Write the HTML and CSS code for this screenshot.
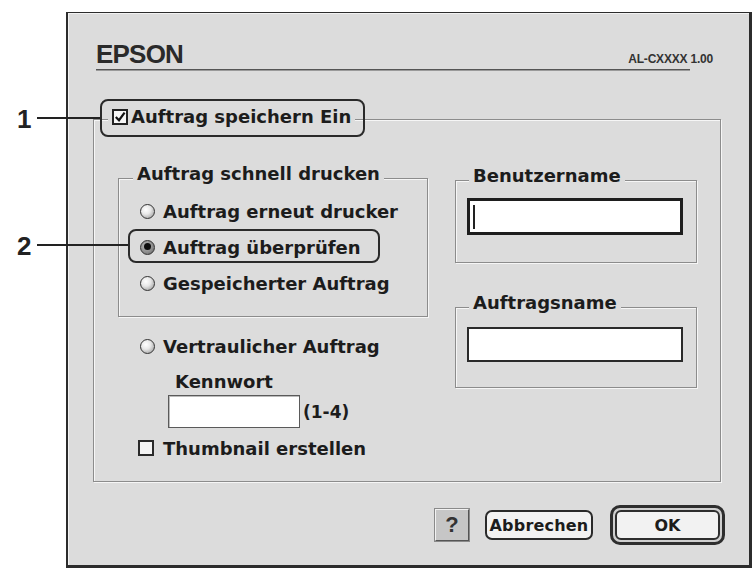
FILE: index.html
```html
<!DOCTYPE html>
<html>
<head>
<meta charset="utf-8">
<title>EPSON</title>
<link rel="stylesheet" href="styles.css">
</head>
<body>
<div class="window">
  <div class="header">
    <span class="brand">EPSON</span>
    <span class="version">AL-CXXXX 1.00</span>
  </div>
  <div class="rule"></div>

  <div class="group main">
    <div class="title main-title">
      <span class="check"><svg viewBox="0 0 16 16" width="16" height="16"><rect x="1" y="1" width="14" height="14" fill="#f6f6f6" stroke="#222" stroke-width="2"/><path d="M3.8 8 L7 11.2 L12.6 3.6" fill="none" stroke="#111" stroke-width="2.2"/></svg></span>
      <span>Auftrag speichern Ein</span>
    </div>
    <div class="cols">
      <div class="col-left">
        <div class="group quick">
          <div class="title">Auftrag schnell drucken</div>
          <div class="radios">
            <div class="opt"><span class="radio"></span><span>Auftrag erneut drucker</span></div>
            <div class="opt"><span class="radio on"></span><span>Auftrag überprüfen</span></div>
            <div class="opt"><span class="radio"></span><span>Gespeicherter Auftrag</span></div>
          </div>
        </div>
        <div class="opt conf"><span class="radio"></span><span>Vertraulicher Auftrag</span></div>
        <div class="pw-label">Kennwort</div>
        <div class="pw-row"><span class="field pw"></span><span class="hint">(1-4)</span></div>
        <div class="opt thumb"><span class="check box"></span><span>Thumbnail erstellen</span></div>
      </div>
      <div class="col-right">
        <div class="group user">
          <div class="title">Benutzername</div>
          <div class="field focus"><span class="caret"></span></div>
        </div>
        <div class="group job">
          <div class="title">Auftragsname</div>
          <div class="field plain"></div>
        </div>
      </div>
    </div>
  </div>

  <div class="buttons">
    <div class="btn help">?</div>
    <div class="btn cancel">Abbrechen</div>
    <div class="btn ok"><span class="ok-inner">OK</span></div>
  </div>
</div>

<div class="callout-num n1">1</div>
<div class="callout-line l1"></div>
<div class="callout-box b1"></div>
<div class="callout-num n2">2</div>
<div class="callout-line l2"></div>
<div class="callout-box b2"></div>
</body>
</html>
```

FILE: styles.css
```css
html, body {
  margin: 0;
  padding: 0;
  background: #ffffff;
}
body {
  width: 754px;
  height: 568px;
  overflow: hidden;
  position: relative;
  font-family: "DejaVu Sans", "Liberation Sans", sans-serif;
  color: #1c1c1c;
}
.window {
  margin: 12px 0 0 66px;
  width: 686px;
  height: 556px;
  box-sizing: border-box;
  border-style: solid;
  border-color: #2c2c2c;
  border-width: 1px 3px 3px 2px;
  background: #dcdcdc;
  box-shadow: inset 1px 1px 0 #f2f2f2;
  padding: 27px 28px 0 25px;
}
.header {
  display: flex;
  justify-content: space-between;
  align-items: baseline;
  margin: 0 8px 0 3px;
  height: 28px;
}
.brand {
  font-family: "Liberation Sans", Arial, sans-serif;
  font-weight: bold;
  font-size: 26px;
  line-height: 28px;
  letter-spacing: -0.8px;
  color: #2a2a2a;
}
.version {
  font-family: "Liberation Sans", Arial, sans-serif;
  font-weight: bold;
  font-size: 12px;
  letter-spacing: -0.2px;
  color: #333;
}
.rule {
  margin: 1px 0 0 3px;
  width: 594px;
  height: 1px;
  background: #555;
  border-bottom: 1px solid #9a9a9a;
}
.group {
  border: 1px solid #8c8c8c;
  box-shadow: 1px 1px 0 #f6f6f6, inset 1px 1px 0 #f6f6f6;
}
.title {
  width: fit-content;
  background: #dcdcdc;
  padding: 0 4px;
  font-weight: bold;
  font-size: 18px;
  line-height: 20px;
  white-space: nowrap;
}
.main {
  margin-top: 48px;
  padding: 0 23px 15px 24px;
}
.main-title {
  display: flex;
  align-items: center;
  gap: 3px;
  line-height: 22px;
  margin: -14px 0 0 -10px;
}
.check {
  display: block;
  width: 16px;
  height: 16px;
  flex: none;
}
.check svg { display: block; }
.check.box {
  width: 16px;
  height: 16px;
  box-sizing: border-box;
  border: 2px solid #2a2a2a;
  background: #f4f4f4;
}
.cols {
  display: grid;
  grid-template-columns: 310px 242px;
  column-gap: 27px;
  margin-top: 50px;
  align-items: start;
}
.quick {
  padding: 0 0 15px 21px;
}
.quick .title {
  margin: -15px 0 0 -7px;
}
.radios {
  margin-top: 9px;
}
.opt {
  display: flex;
  align-items: center;
  gap: 8px;
  height: 36px;
  font-weight: bold;
  font-size: 18px;
  white-space: nowrap;
}
.radio {
  width: 15px;
  height: 15px;
  box-sizing: border-box;
  border-radius: 50%;
  border: 1.5px solid #333;
  background: radial-gradient(circle at 38% 35%, #ffffff 0%, #e8e8e8 40%, #8e8e8e 100%);
  position: relative;
  flex: none;
}
.radio.on {
  background: radial-gradient(circle at 40% 38%, #bdbdbd 0%, #8a8a8a 60%, #555 100%);
}
.radio.on::after {
  content: "";
  position: absolute;
  left: 2.5px;
  top: 2.5px;
  width: 7px;
  height: 7px;
  border-radius: 50%;
  background: #0e0e0e;
}
.conf {
  margin-top: 11px;
  padding-left: 22px;
}
.pw-label {
  margin: 8px 0 0 57px;
  font-weight: bold;
  font-size: 18px;
  line-height: 20px;
}
.pw-row {
  display: flex;
  align-items: center;
  gap: 3px;
  margin: 3px 0 0 50px;
  height: 33px;
}
.field {
  background: #ffffff;
  box-sizing: border-box;
}
.pw {
  width: 132px;
  height: 33px;
  border: 1.5px solid #5a5a5a;
  box-shadow: inset 1px 1px 0 #bbb;
}
.hint {
  font-weight: bold;
  font-size: 17px;
}
.thumb {
  margin-top: 2px;
  padding-left: 20px;
  gap: 9px;
}
.user {
  margin-top: 2px;
  padding: 0 13px 27px 11px;
}
.user .title,
.job .title {
  margin: -15px 0 0 2px;
}
.user .field {
  margin-top: 12px;
}
.focus {
  height: 37px;
  border: 3px solid #1e1e1e;
  padding: 4px 3px;
}
.caret {
  display: block;
  width: 2px;
  height: 24px;
  background: #222;
}
.job {
  margin-top: 44px;
  padding: 0 13px 25px 11px;
}
.job .field {
  margin-top: 14px;
}
.plain {
  height: 35px;
  border: 2px solid #2a2a2a;
}
.buttons {
  display: flex;
  justify-content: flex-end;
  align-items: center;
  height: 40px;
  margin: 23px -4px 0 0;
}
.btn {
  box-sizing: border-box;
  display: flex;
  align-items: center;
  justify-content: center;
  font-weight: bold;
  color: #1c1c1c;
}
.help {
  width: 34px;
  height: 32px;
  background: #c6c6c6;
  border: 1px solid;
  border-color: #f2f2f2 #555 #555 #f2f2f2;
  outline: 1px solid #8a8a8a;
  font-family: "Liberation Sans", Arial, sans-serif;
  font-size: 22px;
  color: #333;
  margin-right: 16px;
}
.cancel {
  width: 108px;
  height: 30px;
  border: 2px solid #2a2a2a;
  border-radius: 7px;
  background: #f2f2f2;
  font-size: 16px;
  letter-spacing: 0.2px;
  margin-right: 17px;
}
.ok {
  width: 115px;
  height: 40px;
  border: 3px solid #2e2e2e;
  border-radius: 10px;
  padding: 2px;
  background: #cfcfcf;
}
.ok-inner {
  flex: 1;
  align-self: stretch;
  display: flex;
  align-items: center;
  justify-content: center;
  border: 2px solid #2e2e2e;
  border-radius: 6px;
  background: #f2f2f2;
  font-size: 16px;
}
/* annotation overlays */
.callout-num {
  position: absolute;
  left: 17px;
  font-family: "Liberation Sans", Arial, sans-serif;
  font-weight: bold;
  font-size: 26px;
  line-height: 26px;
  color: #222;
}
.n1 { top: 106px; }
.n2 { top: 233px; }
.callout-line {
  position: absolute;
  left: 37px;
  height: 1.5px;
  background: #222;
}
.l1 { top: 117px; width: 63px; }
.l2 { top: 244px; width: 91px; }
.callout-box {
  position: absolute;
  border: 2px solid #2a2a2a;
  border-radius: 8px;
  box-sizing: border-box;
}
.b1 { left: 100px; top: 99px; width: 265px; height: 38px; }
.b2 { left: 128px; top: 229px; width: 252px; height: 34px; }
```
